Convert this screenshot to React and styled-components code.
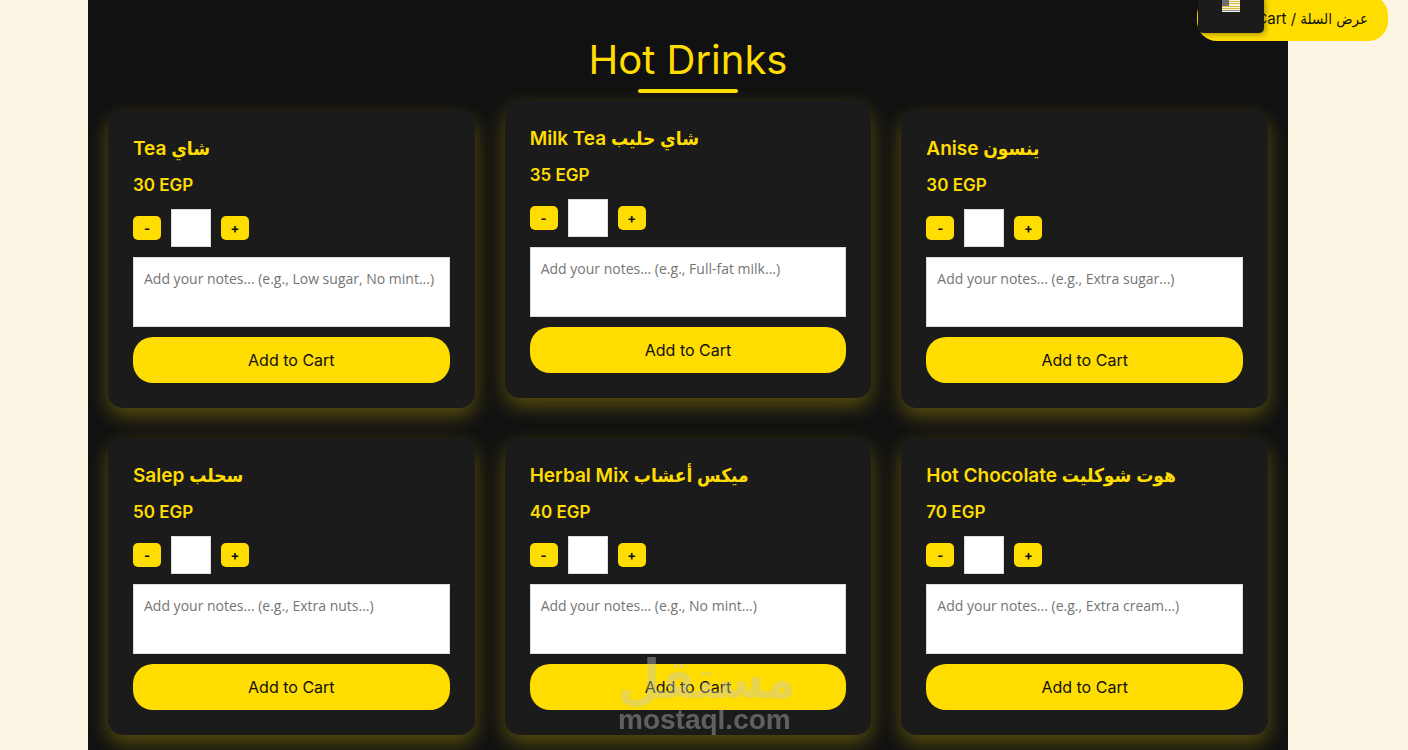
import React, { useState } from 'react';
import styled, { createGlobalStyle } from 'styled-components';

const GlobalStyle = createGlobalStyle`
  * {
    box-sizing: border-box;
  }

  body {
    margin: 0;
    background: #fdf5e3;
    font-family: Inter, "DejaVu Sans Condensed", "DejaVu Sans", sans-serif;
    overflow: hidden;
  }

  button, input, textarea {
    font-family: inherit;
  }
`;

const Page = styled.div`
  padding-right: 32px;
  height: 100vh;
  overflow: hidden;
`;

const Menu = styled.main`
  max-width: 1200px;
  min-height: 100vh;
  margin: 0 auto;
  padding: 36px 20px;
  background: #111;
`;

const Heading = styled.h2`
  display: flex;
  flex-direction: column;
  align-items: center;
  gap: 5px;
  margin: 0 0 18px;
  color: #ffdd00;
  font-size: 40px;
  font-weight: 400;
  line-height: 48px;

  &::after {
    content: '';
    width: 100px;
    height: 4px;
    border-radius: 2px;
    background: #ffdd00;
  }
`;

const Grid = styled.div`
  display: grid;
  grid-template-columns: repeat(3, 1fr);
  gap: 30px;
`;

const Card = styled.article`
  display: flex;
  flex-direction: column;
  gap: 10px;
  padding: 25px;
  border-radius: 15px;
  background: #1b1b1b;
  box-shadow: 0 8px 20px rgba(255, 221, 0, .3);
  transform: ${({ $raised }) => ($raised ? 'translateY(-10px)' : 'none')};
`;

const Name = styled.h3`
  margin: 0;
  color: #ffdd00;
  font-size: 19px;
  font-weight: 600;
  line-height: 26px;
`;

const Price = styled.p`
  margin: 0;
  color: #ffdd00;
  font-size: 17px;
  font-weight: 600;
  line-height: 27px;
`;

const Quantity = styled.div`
  display: flex;
  align-items: center;
  gap: 10px;
`;

const StepButton = styled.button`
  width: 28px;
  height: 24px;
  padding: 0;
  border: 0;
  border-radius: 5px;
  background: #ffdd00;
  color: #111;
  font-size: 13px;
  font-weight: 700;
`;

const Amount = styled.input`
  width: 40px;
  height: 38px;
  padding: 10px;
  border: 1px solid #ddd;
  background: #fff;
  color: #fff;
`;

const Notes = styled.textarea`
  display: block;
  width: 100%;
  height: 70px;
  padding: 10px;
  border: 1px solid #ddd;
  background: #fff;
  font-family: "Open Sans", sans-serif;
  font-size: 14px;
  line-height: 22px;
  resize: none;

  &::placeholder {
    color: #757575;
  }
`;

const AddButton = styled.button`
  height: 46px;
  border: 0;
  border-radius: 20px;
  background: #ffdd00;
  color: #111;
  font-size: 16px;
`;

const CartButton = styled.button`
  position: fixed;
  top: -5px;
  right: 20px;
  height: 46px;
  padding: 0 20px;
  border: 0;
  border-radius: 20px;
  background: #ffdd00;
  color: #111;
  font-size: 15px;
`;

const Language = styled.div`
  position: fixed;
  top: -5px;
  right: 144px;
  display: flex;
  justify-content: center;
  width: 66px;
  height: 38px;
  border-radius: 5px;
  background: #1b1b1b;
  box-shadow: 2px 2px 5px rgba(0, 0, 0, .3);
`;

const Watermark = styled.div`
  position: fixed;
  bottom: 14px;
  left: 618px;
  width: 171px;
  color: #c8c8c8;
  font-family: "Liberation Sans", sans-serif;
  font-size: 28px;
  font-weight: 700;
  line-height: 32px;
  white-space: nowrap;
  opacity: .4;
  pointer-events: none;
`;

const WatermarkArabic = styled.div`
  font-family: "DejaVu Sans Condensed", "DejaVu Sans", sans-serif;
  font-size: 54px;
  line-height: 48px;
`;

const drinks = [
  { name: 'Tea شاي', price: 30, hint: 'Low sugar, No mint...' },
  { name: 'Milk Tea شاي حليب', price: 35, hint: 'Full-fat milk...', raised: true },
  { name: 'Anise ينسون', price: 30, hint: 'Extra sugar...' },
  { name: 'Salep سحلب', price: 50, hint: 'Extra nuts...' },
  { name: 'Herbal Mix ميكس أعشاب', price: 40, hint: 'No mint...' },
  { name: 'Hot Chocolate هوت شوكليت', price: 70, hint: 'Extra cream...' },
];

const Drink = ({ name, price, hint, raised }) => {
  const [amount, setAmount] = useState(0);

  return (
    <Card $raised={raised}>
      <Name>{name}</Name>
      <Price>{price} EGP</Price>
      <Quantity>
        <StepButton type="button" onClick={() => setAmount(Math.max(0, amount - 1))}>-</StepButton>
        <Amount aria-label={`Quantity of ${name}`} value={amount || ''} readOnly />
        <StepButton type="button" onClick={() => setAmount(amount + 1)}>+</StepButton>
      </Quantity>
      <Notes aria-label={`Notes for ${name}`} placeholder={`Add your notes... (e.g., ${hint})`} />
      <AddButton type="button">Add to Cart</AddButton>
    </Card>
  );
};

const Flag = () => (
  <svg width="18" height="17" viewBox="0 0 18 17" aria-hidden="true">
    <rect width="18" height="17" fill="#f6f2e4" />
    <path d="M0 6.5h18M0 8.5h18M0 11.5h18M0 13.5h18" stroke="#d9b92e" />
    <path d="M0 15.5h18" stroke="#8f8f8f" />
    <rect width="7" height="11" fill="#6f6f73" />
  </svg>
);

const App = () => (
  <>
    <GlobalStyle />
    <Page>
      <Menu>
        <Heading>Hot Drinks</Heading>
        <Grid>
          {drinks.map((drink) => <Drink key={drink.name} {...drink} />)}
        </Grid>
      </Menu>
    </Page>
    <CartButton type="button">View Cart / عرض السلة</CartButton>
    <Language><Flag /></Language>
    <Watermark>
      <WatermarkArabic lang="ar">مستقل</WatermarkArabic>
      mostaql.com
    </Watermark>
  </>
);

export default App;
